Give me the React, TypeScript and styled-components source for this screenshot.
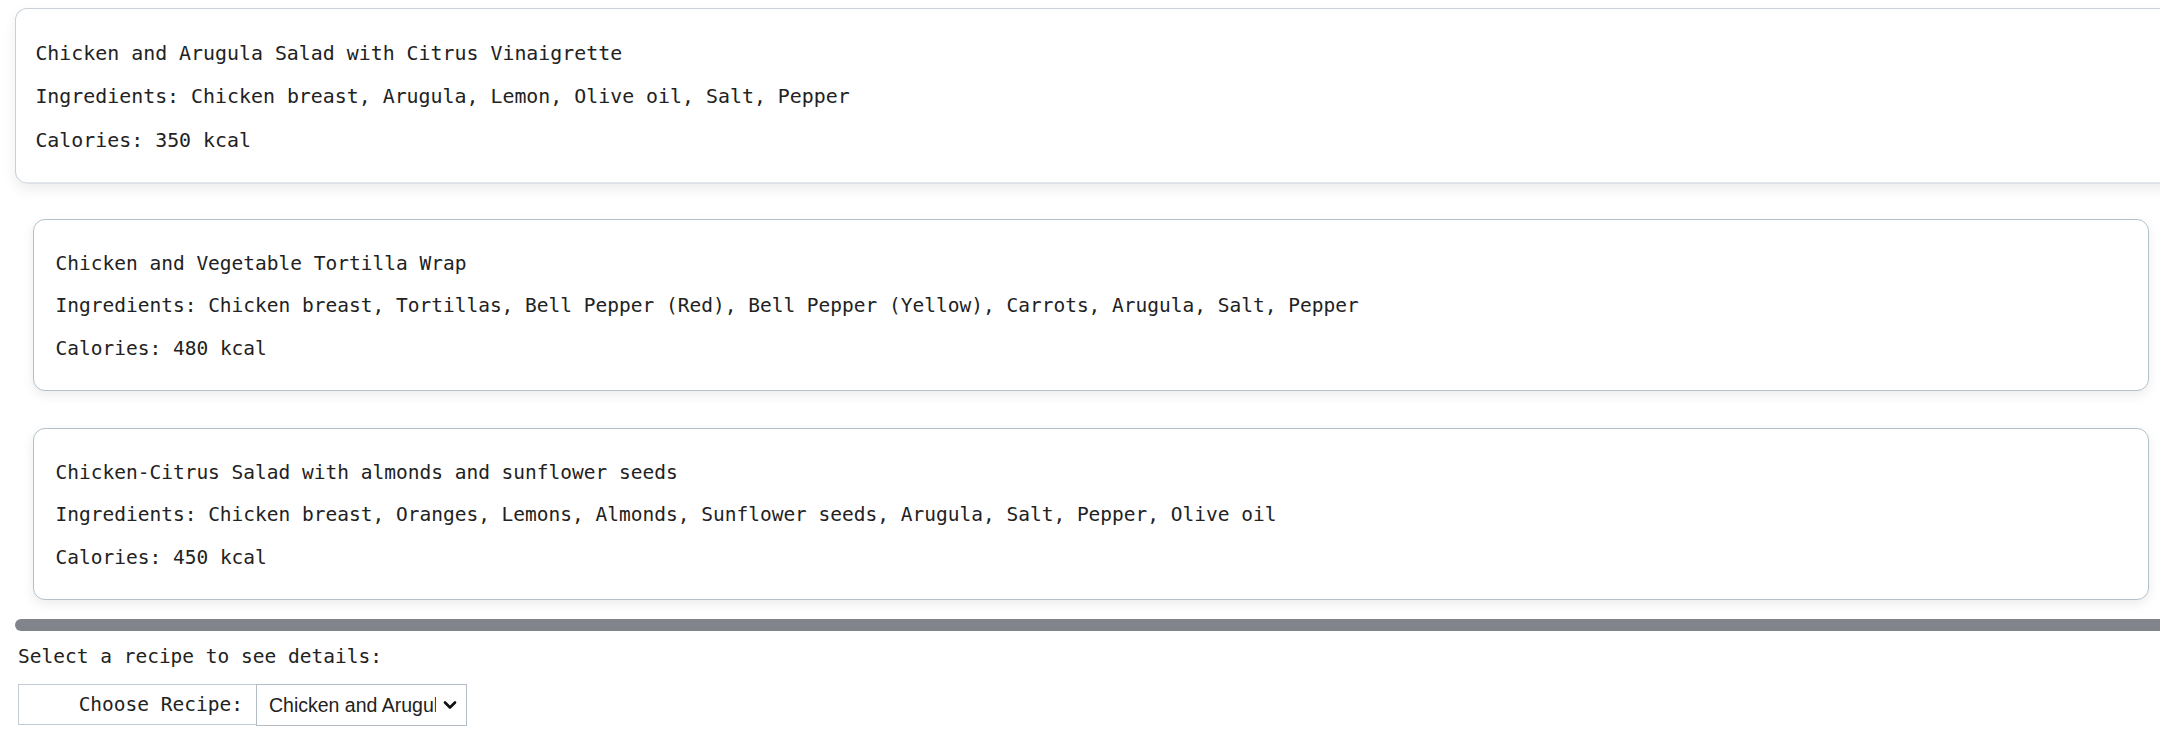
import React, { useState } from "react";
import styled, { createGlobalStyle, css } from "styled-components";
import { ChevronDown } from "lucide-react";

const GlobalStyle = createGlobalStyle`
  html, body {
    margin: 0;
    padding: 0;
    background: #ffffff;
  }
  body {
    font-family: "DejaVu Sans Mono", "Liberation Mono", monospace;
    color: #222222;
    overflow: hidden;
  }
  * { box-sizing: border-box; }
`;

type Recipe = {
  name: string;
  ingredients: string[];
  calories: number;
};

const recipes: Recipe[] = [
  {
    name: "Chicken and Arugula Salad with Citrus Vinaigrette",
    ingredients: ["Chicken breast", "Arugula", "Lemon", "Olive oil", "Salt", "Pepper"],
    calories: 350,
  },
  {
    name: "Chicken and Vegetable Tortilla Wrap",
    ingredients: [
      "Chicken breast",
      "Tortillas",
      "Bell Pepper (Red)",
      "Bell Pepper (Yellow)",
      "Carrots",
      "Arugula",
      "Salt",
      "Pepper",
    ],
    calories: 480,
  },
  {
    name: "Chicken-Citrus Salad with almonds and sunflower seeds",
    ingredients: [
      "Chicken breast",
      "Oranges",
      "Lemons",
      "Almonds",
      "Sunflower seeds",
      "Arugula",
      "Salt",
      "Pepper",
      "Olive oil",
    ],
    calories: 450,
  },
];

const Page = styled.div`
  width: 2160px;
`;

const ListViewport = styled.div`
  margin-left: 15px;
`;

const CardList = styled.div`
  display: flex;
  flex-direction: column;
  gap: 37px;
  padding: 10px 11px 19px 18px;
`;

const Card = styled.div<{ $selected?: boolean }>`
  height: 172px;
  display: flex;
  flex-direction: column;
  gap: 18.5px;
  padding: 31.5px 20px 29.5px 21.5px;
  background: #ffffff;
  border: 1px solid #b3c1ca;
  border-radius: 12px;
  box-shadow: 0 4px 12px rgba(0, 0, 0, 0.08);
  font-size: 19.5px;
  ${(p) =>
    p.$selected &&
    css`
      padding-left: 19px;
      border-color: #c9d0d7;
      transform: scale(1.02);
      transform-origin: 900px 100px;
      box-shadow: 0 6px 14px rgba(0, 0, 0, 0.07);
    `}
`;

const CardLine = styled.div`
  line-height: 24px;
  white-space: nowrap;
`;

const ScrollThumb = styled.div`
  height: 11.5px;
  background: #81858b;
  border-radius: 6px 0 0 6px;
`;

const Details = styled.div`
  padding-left: 18px;
  margin-top: 14px;
`;

const Prompt = styled.div`
  font-size: 19.5px;
  line-height: 24px;
  white-space: nowrap;
`;

const FormRow = styled.div`
  display: flex;
  margin-top: 15px;
`;

const ChooseLabel = styled.label`
  width: 238px;
  height: 41.5px;
  display: flex;
  align-items: center;
  justify-content: flex-end;
  padding-right: 13px;
  border: 1px solid #c3ccd4;
  border-right: none;
  font-size: 19.5px;
  white-space: nowrap;
`;

const SelectWrap = styled.div`
  position: relative;
  width: 211px;
  height: 42px;
`;

const RecipeSelect = styled.select`
  appearance: none;
  -webkit-appearance: none;
  width: 100%;
  height: 100%;
  margin: 0;
  padding: 0 30px 0 12px;
  border: 1px solid #b4bdc5;
  border-radius: 0;
  background: #ffffff;
  color: #222222;
  font-family: "Liberation Sans", Arial, sans-serif;
  font-size: 19.5px;
  outline: none;
`;

const SelectChevron = styled.span`
  position: absolute;
  right: 7px;
  top: 50%;
  transform: translateY(-50%);
  display: flex;
  pointer-events: none;
  color: #111111;
`;

export default function App() {
  const [selected, setSelected] = useState(0);
  return (
    <Page>
      <GlobalStyle />
      <ListViewport>
        <CardList>
          {recipes.map((r, i) => (
            <Card key={r.name} $selected={i === selected}>
              <CardLine>{r.name}</CardLine>
              <CardLine>Ingredients: {r.ingredients.join(", ")}</CardLine>
              <CardLine>Calories: {r.calories} kcal</CardLine>
            </Card>
          ))}
        </CardList>
        <ScrollThumb />
      </ListViewport>
      <Details>
        <Prompt>Select a recipe to see details:</Prompt>
        <FormRow>
          <ChooseLabel htmlFor="recipe-select">Choose Recipe:</ChooseLabel>
          <SelectWrap>
            <RecipeSelect
              id="recipe-select"
              value={selected}
              onChange={(e) => setSelected(Number(e.target.value))}
            >
              {recipes.map((r, i) => (
                <option key={r.name} value={i}>
                  {r.name}
                </option>
              ))}
            </RecipeSelect>
            <SelectChevron>
              <ChevronDown size={20} strokeWidth={3.2} />
            </SelectChevron>
          </SelectWrap>
        </FormRow>
      </Details>
    </Page>
  );
}
